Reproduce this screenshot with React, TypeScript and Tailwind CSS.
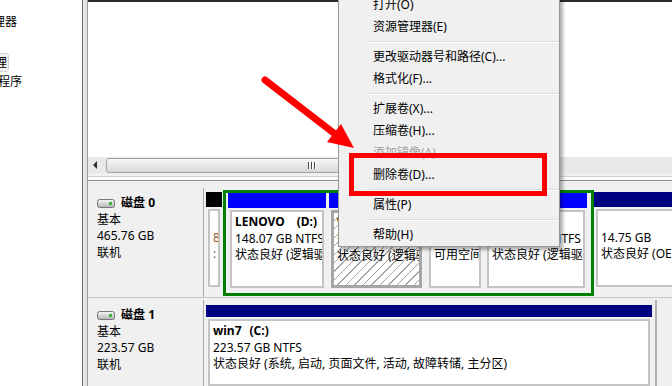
import React from 'react'

type MenuEntry = { label: string; disabled?: boolean } | 'sep'

const MENU: MenuEntry[] = [
  { label: '打开(O)' },
  { label: '资源管理器(E)' },
  'sep',
  { label: '更改驱动器号和路径(C)...' },
  { label: '格式化(F)...' },
  'sep',
  { label: '扩展卷(X)...' },
  { label: '压缩卷(H)...' },
  { label: '添加镜像(A)', disabled: true },
  { label: '删除卷(D)...' },
  'sep',
  { label: '属性(P)' },
  'sep',
  { label: '帮助(H)' },
]

function DiskIcon() {
  return (
    <svg width="18" height="9" viewBox="0 0 18 9" className="shrink-0">
      <defs>
        <linearGradient id="diskfill" x1="0" y1="0" x2="0" y2="1">
          <stop offset="0" stopColor="#f6f6f6" />
          <stop offset="1" stopColor="#b4b4b4" />
        </linearGradient>
      </defs>
      <rect x="0.5" y="0.5" width="17" height="8" rx="2" fill="url(#diskfill)" stroke="#767676" />
      <rect x="12" y="3" width="3" height="3" fill="#38b038" />
    </svg>
  )
}

function DiskLabel({ n, size }: { n: number; size: string }) {
  return (
    <div className="w-[116px] shrink-0 bg-[#f0f0f0] border-r border-[#a9a9a9] pl-[9px] pt-[7px] leading-[16.5px]">
      <div className="flex items-center">
        <DiskIcon />
        <span className="ml-[6px] font-bold">磁盘 {n}</span>
      </div>
      <div>基本</div>
      <div>{size}</div>
      <div>联机</div>
    </div>
  )
}

function Partition({
  width,
  head,
  lines,
  hatched,
  bodyH = 'h-[78px]',
  extra = '',
}: {
  width: string
  head: string
  lines: React.ReactNode[]
  hatched?: boolean
  bodyH?: string
  extra?: string
}) {
  return (
    <div className={`${width} shrink-0 flex flex-col ${extra}`}>
      <div className={`h-[15px] ${head}`} />
      <div
        className={`mt-[2px] mx-[2px] ${bodyH} pl-[3px] pt-[2px] leading-[16.5px] whitespace-nowrap overflow-hidden ${
          hatched
            ? 'border-[3px] border-[#a6a6a6] bg-white bg-[repeating-linear-gradient(135deg,transparent_0,transparent_5px,#a4a4a4_5px,#a4a4a4_6px)]'
            : 'border-2 border-[#c4c4c4] bg-white'
        }`}
      >
        {lines.map((l, i) => (
          <div key={i} className="h-[16.5px]">
            {l}
          </div>
        ))}
      </div>
    </div>
  )
}

export default function App() {
  return (
    <div className="relative w-[672px] h-[386px] overflow-hidden bg-white flex text-[12px] text-black font-['Noto_Sans','Noto_Sans_CJK_SC',sans-serif]">
      {/* console tree, scrolled so only the right ends show */}
      <div className="w-[82px] shrink-0 bg-white pt-[12px]">
        <div className="w-[17px] h-[20px] flex items-center justify-end overflow-hidden whitespace-nowrap">
          设备管理器
        </div>
        <div className="h-[20px]" />
        <div className="w-[9px] h-[20px] flex items-center justify-end overflow-hidden whitespace-nowrap">
          <span className="px-[1px] leading-[17px] border border-[#d4d4d4] bg-[#f2f2f2] rounded-[3px]">磁盘管理</span>
        </div>
        <div className="w-[22px] h-[20px] flex items-center justify-end overflow-hidden whitespace-nowrap">
          服务和应用程序
        </div>
      </div>

      {/* splitter */}
      <div className="w-[6px] shrink-0 flex">
        <div className="w-[1px] bg-[#6f6f6f]" />
        <div className="w-[4px] bg-[#e6e6e6]" />
        <div className="w-[1px] bg-[#9c9c9c]" />
      </div>

      {/* main */}
      <div className="flex-1 min-w-0 flex flex-col">
        <div className="h-[2px] bg-[#2b2b2b]" />
        <div className="h-[155px] bg-white" />

        {/* horizontal scrollbar */}
        <div className="h-[16px] bg-[#e9e9e9] flex items-center">
          <div className="w-[18px] h-full flex items-center pl-[5px]">
            <svg width="5" height="8" viewBox="0 0 5 8">
              <path d="M4 0 L0 4 L4 8 Z" fill="#2e2e2e" />
            </svg>
          </div>
          <div className="w-[412px] h-[15px] rounded-[3px] border border-[#a3a3a3] bg-gradient-to-b from-[#f7f7f7] to-[#d8d8d8] flex items-center justify-center">
            <svg width="8" height="7" viewBox="0 0 8 7">
              <rect x="0" y="0" width="1" height="7" fill="#4a4a4a" />
              <rect x="3" y="0" width="1" height="7" fill="#4a4a4a" />
              <rect x="6" y="0" width="1" height="7" fill="#4a4a4a" />
              <rect x="1" y="0" width="1" height="7" fill="#ffffff" />
              <rect x="4" y="0" width="1" height="7" fill="#ffffff" />
              <rect x="7" y="0" width="1" height="7" fill="#ffffff" />
            </svg>
          </div>
        </div>
        <div className="h-[3px] bg-[#f0f0f0]" />
        <div className="h-[1px] bg-[#d2d2d2]" />
        <div className="h-[3px] bg-[#fafafa]" />
        <div className="h-[1px] bg-[#8e8e8e]" />
        <div className="h-[7px] bg-[#f0f0f0]" />

        {/* disk 0 */}
        <div className="h-[109px] flex bg-[#f0f0f0] overflow-hidden">
          <DiskLabel n={0} size="465.76 GB" />
          <Partition
            width="w-[16px]"
            head="bg-black"
            extra="ml-[2px] mt-[4px]"
            lines={['', <span className="text-[#8a5a30]">8</span>, <span className="text-[#8a5a30]">:</span>]}
          />
          {/* extended partition */}
          <div className="ml-[1px] mt-[2px] w-[371px] h-[106px] shrink-0 border-[3px] border-[#008000] flex">
            <Partition
              width="w-[98px]"
              head="bg-[#0000ff]"
              extra="ml-[2px]"
              lines={[
                <span className="font-bold">
                  LENOVO<span className="ml-[12px]">(D:)</span>
                </span>,
                '148.07 GB NTFS',
                '状态良好 (逻辑驱动器)',
              ]}
            />
            <Partition
              width="w-[95px]"
              head="bg-[#0000ff]"
              extra="ml-[3px]"
              hatched
              lines={[<span className="font-bold">WORK (E:)</span>, '58.59 GB NTFS', '状态良好 (逻辑驱动器)']}
            />
            <Partition
              width="w-[56px]"
              head="bg-[#80ff80]"
              extra="ml-[3px]"
              lines={['', '4.00 GB', '可用空间']}
            />
            <Partition
              width="w-[102px]"
              head="bg-[#0000ff]"
              extra="ml-[2px]"
              lines={[<span className="font-bold">DATA (F:)</span>, '195.31 GB NTFS', '状态良好 (逻辑驱动器)']}
            />
          </div>
          <Partition
            width="w-[100px]"
            head="bg-[#000080]"
            extra="mt-[4px]"
            lines={['', '14.75 GB', '状态良好 (OEM 分区)']}
          />
        </div>

        <div className="h-[3px] bg-[#f0f0f0] border-t border-[#c6c6c6]" />

        {/* disk 1 */}
        <div className="h-[86px] flex bg-[#f0f0f0] overflow-hidden">
          <DiskLabel n={1} size="223.57 GB" />
          <Partition
            width="w-[446px]"
            head="bg-[#000080]"
            extra="ml-[2px] mt-[5px]"
            bodyH="h-[80px]"
            lines={[
              <span className="font-bold">
                win7<span className="ml-[8px]">(C:)</span>
              </span>,
              '223.57 GB NTFS',
              '状态良好 (系统, 启动, 页面文件, 活动, 故障转储, 主分区)',
            ]}
          />
          <div className="ml-[3px] w-[2px] bg-[#b0b0b0]" />
        </div>
      </div>

      {/* context menu */}
      <div className="absolute left-[338px] top-[-7px] w-[222px] bg-[#f0f0f0] border border-[#979797] shadow-[3px_3px_3px_rgba(0,0,0,0.3)]">
        {MENU.map((m, i) =>
          m === 'sep' ? (
            <div key={i} className="h-[8px] flex flex-col justify-center pl-[30px] pr-[1px]">
              <div className="h-[1px] bg-[#dcdcdc]" />
              <div className="h-[1px] bg-white" />
            </div>
          ) : (
            <div
              key={i}
              className={`h-[22px] flex items-center pl-[34px] whitespace-nowrap ${
                m.disabled ? 'text-[#a3a3a3]' : 'text-black'
              }`}
            >
              {m.label}
            </div>
          ),
        )}
      </div>

      {/* annotation: red box */}
      <div className="absolute left-[349px] top-[153px] w-[198px] h-[43px] border-[5px] border-[#ff0000]" />

      {/* annotation: red arrow */}
      <svg className="absolute left-0 top-0 pointer-events-none" width="672" height="386" viewBox="0 0 672 386">
        <line x1="265" y1="80" x2="335" y2="134" stroke="#ff0000" strokeWidth="7" strokeLinecap="round" />
        <polygon points="354,148 327,142 341,124" fill="#ff0000" />
      </svg>
    </div>
  )
}
